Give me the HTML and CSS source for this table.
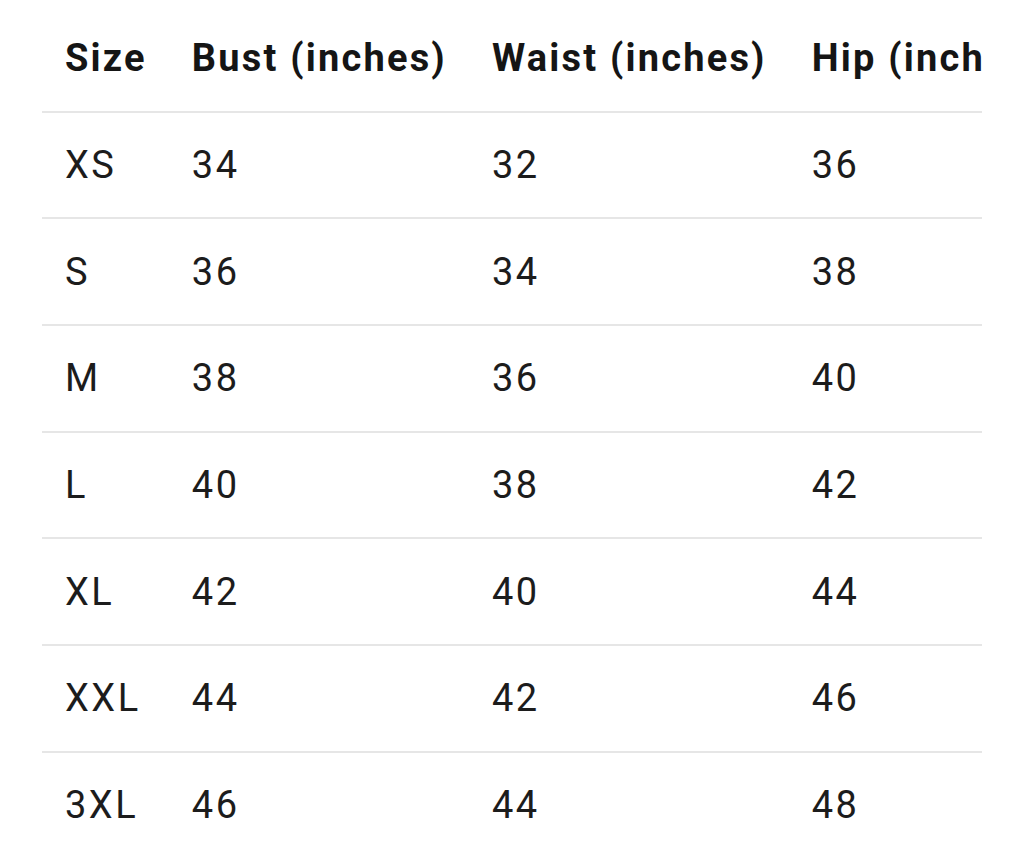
FILE: index.html
```html
<!DOCTYPE html>
<html>
<head>
<meta charset="utf-8">
<link rel="stylesheet" href="styles.css">
</head>
<body>
<div class="wrap">
<table class="size-table">
<thead>
<tr><th>Size</th><th>Bust (inches)</th><th>Waist (inches)</th><th>Hip (inches)</th></tr>
</thead>
<tbody>
<tr><td>XS</td><td>34</td><td>32</td><td>36</td></tr>
<tr><td>S</td><td>36</td><td>34</td><td>38</td></tr>
<tr><td>M</td><td>38</td><td>36</td><td>40</td></tr>
<tr><td>L</td><td>40</td><td>38</td><td>42</td></tr>
<tr><td>XL</td><td>42</td><td>40</td><td>44</td></tr>
<tr><td>XXL</td><td>44</td><td>42</td><td>46</td></tr>
<tr><td>3XL</td><td>46</td><td>44</td><td>48</td></tr>
</tbody>
</table>
</div>
</body>
</html>
```
FILE: styles.css
```css
html, body {
  margin: 0;
  padding: 0;
  background: #ffffff;
}
body {
  font-family: Roboto, "Liberation Sans", sans-serif;
  color: #1c1c1c;
}
.wrap {
  margin: 6px 0 0 42px;
  width: 940px;
  overflow: hidden;
}
.size-table {
  border-collapse: collapse;
  white-space: nowrap;
}
.size-table th,
.size-table td {
  padding: 0 22px 0 23px;
  height: 104.7px;
  text-align: left;
  vertical-align: middle;
  font-size: 38px;
  line-height: 1;
}
.size-table th {
  font-weight: 700;
  color: #151515;
  letter-spacing: 2.2px;
}
.size-table td {
  font-weight: 400;
  letter-spacing: 2.5px;
}
.size-table tr {
  border-bottom: 2px solid #e6e6e6;
}
.size-table tbody tr:last-child {
  border-bottom: none;
}
```
